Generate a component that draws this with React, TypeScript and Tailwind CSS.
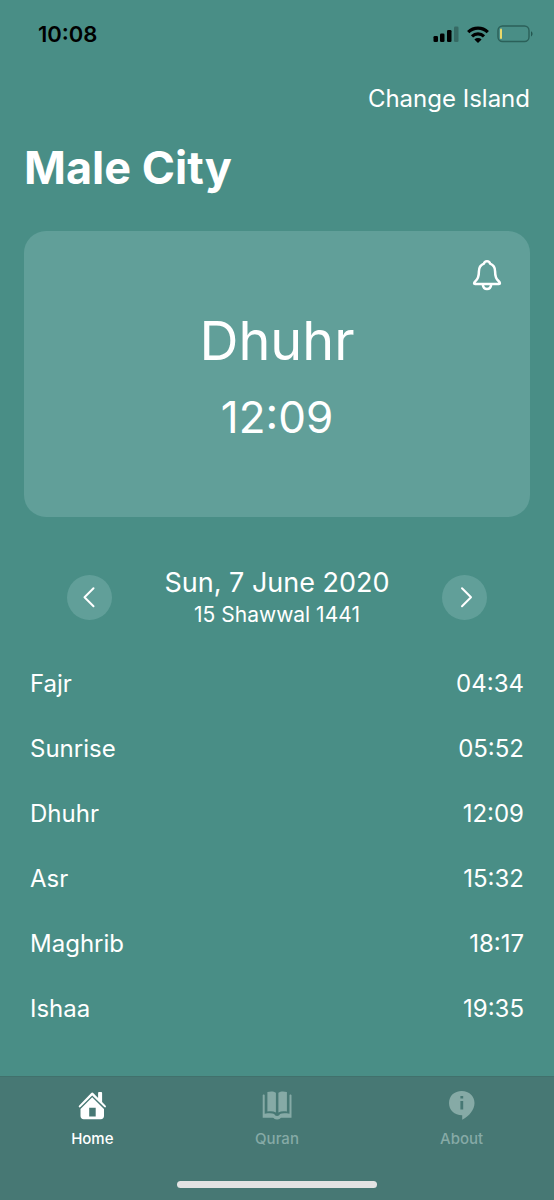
import React from "react";

const prayers = [
  { name: "Fajr", time: "04:34" },
  { name: "Sunrise", time: "05:52" },
  { name: "Dhuhr", time: "12:09" },
  { name: "Asr", time: "15:32" },
  { name: "Maghrib", time: "18:17" },
  { name: "Ishaa", time: "19:35" },
];

function StatusBar() {
  return (
    <header className="flex h-[68px] items-center justify-between pr-[21px] pl-[38px] text-black">
      <time className="text-[22px] leading-7 font-semibold">10:08</time>
      <div className="flex items-center gap-2">
        <svg width="26" height="16" viewBox="0 0 26 16" fill="currentColor" aria-hidden="true">
          <rect x="0.500" y="10" width="4.500" height="6" rx="1.3" />
          <rect x="7" y="7.500" width="4.500" height="8.500" rx="1.3" />
          <rect x="14" y="4" width="4.500" height="12" rx="1.3" />
          <rect x="21" y="0.500" width="4.500" height="15.500" rx="1.3" opacity="0.25" />
        </svg>
        <svg width="22" height="17" viewBox="0 0 22 17" fill="none" stroke="currentColor" strokeWidth="3.200" aria-hidden="true">
          <path d="M1.2 6.2a14 14 0 0 1 19.6 0" />
          <path d="M5 10.4a8.6 8.6 0 0 1 12 0" />
          <path d="M11 17 7.400 13.400a5.2 5.2 0 0 1 7.2 0Z" fill="currentColor" stroke="none" />
        </svg>
        <svg width="36" height="18" viewBox="0 0 36 18" fill="none" aria-hidden="true">
          <rect x="1" y="1" width="31" height="15.5" rx="4.5" stroke="#2b6059" strokeWidth="1.4" />
          <rect x="3" y="3.6" width="2" height="10.4" rx="1" fill="#e9d96a" />
          <path d="M34 6.2c2 1 2 4.200 0 5.200Z" fill="#245750" />
        </svg>
      </div>
    </header>
  );
}

function BellIcon() {
  return (
    <svg width="30" height="32" viewBox="0 0 30 32" fill="none" stroke="currentColor" strokeWidth="2.500" strokeLinejoin="round" strokeLinecap="round" aria-hidden="true">
      <path d="M15 2.200c-1.600 0-2.800 1-3.100 2.500C8.300 6.100 6.900 9 6.900 12.500c0 5-.9 7.200-3.200 9.300-1 .9-1.600 1.600-1.600 2.400 0 .6.4.9 1 .9h23.800c.6 0 1-.3 1-.9 0-.8-.6-1.500-1.600-2.400-2.300-2.100-3.200-4.300-3.200-9.300 0-3.500-1.400-6.400-5-7.800C17.800 3.200 16.600 2.200 15 2.200Z" />
      <path d="M10.900 26c.3 2.600 1.900 4 4.100 4s3.800-1.400 4.100-4" />
    </svg>
  );
}

function Chevron({ direction }: { direction: "left" | "right" }) {
  return (
    <svg width="24" height="24" viewBox="0 0 24 24" fill="none" stroke="currentColor" strokeWidth="2" strokeLinecap="round" strokeLinejoin="round" aria-hidden="true">
      <path d={direction === "left" ? "M15.500 3.300 6.500 12.300 15.500 21.300" : "M9 3.300 18 12.300 9 21.300"} />
    </svg>
  );
}

function HomeIcon() {
  return (
    <svg width="30" height="30" viewBox="0 0 30 30" fill="currentColor" aria-hidden="true">
      <path d="M2.200 15.500 14 3.300a1.700 1.700 0 0 1 2.500 0l4.600 4.700V3c0-.7.4-1.100 1.100-1.100h1.800c.7 0 1.100.4 1.100 1.100v8.900l3.400 3.600c1.200 1.300-.1 2.600-1.300 1.500L15.200 5.500 3.500 17c-1.200 1.100-2.500-.2-1.300-1.500Z" />
      <path fillRule="evenodd" d="M15.200 7.200 27 19v7.100c0 2-1.200 3.200-3.200 3.200H6.700c-2 0-3.200-1.200-3.200-3.200V19Zm-3 10.600v8.600h6.500v-8.600Z" />
    </svg>
  );
}

function BookIcon() {
  return (
    <svg width="30" height="30" viewBox="0 0 30 30" fill="currentColor" aria-hidden="true">
      <path d="M5.400 2.100c3.500-1.200 6.300-.8 8.500.6v19.700c-2.400-1.300-5.200-1.500-8.500-.9Z" />
      <path d="M24.900 2.100c-3.500-1.200-6.300-.8-8.500.6v19.700c2.400-1.300 5.200-1.500 8.500-.9Z" />
      <path d="M.7 5.200c0-1 2-1 2 0v18.500c4.200-.5 7.600-.6 9.500.3.500 1.300 1.500 1.900 2.900 1.900s2.400-.6 2.900-1.900c1.900-.9 5.300-.8 9.500-.3V5.200c0-1 2-1 2 0v22.500H19.300c-.9 0-1.600 1.900-4.200 1.900s-3.300-1.900-4.200-1.900H.7Z" />
    </svg>
  );
}

function InfoIcon() {
  return (
    <svg width="30" height="30" viewBox="0 0 30 30" fill="currentColor" aria-hidden="true">
      <path fillRule="evenodd" d="M14.700 1C22.200 1 27.500 6 27.500 13c0 6.700-5.300 13.200-12.300 16.800v-4.600C7.300 25.200 2 20.100 2 13S7.300 1 14.700 1Zm-1.300 5v2.600h2.800V6Zm0 5v8.600h2.800V11Z" />
    </svg>
  );
}

const tabs = [
  { label: "Home", Icon: HomeIcon, active: true },
  { label: "Quran", Icon: BookIcon, active: false },
  { label: "About", Icon: InfoIcon, active: false },
];

export default function App() {
  return (
    <div className="flex min-h-screen flex-col bg-[#498e86] font-['Inter',sans-serif] text-white">
      <StatusBar />
      <main className="flex grow flex-col px-6">
        <div className="flex justify-end pt-[13px]">
          <button type="button" className="text-[24px] leading-9 font-normal">Change Island</button>
        </div>
        <h1 className="pt-[23px] text-[45px] leading-[56px] font-bold">Male City</h1>

        <section className="relative mt-[35px] flex h-[286px] flex-col items-center justify-center gap-2 rounded-[22px] bg-[#619f99] pt-[6px]">
          <button type="button" aria-label="Toggle notification" className="absolute top-7 right-7">
            <BellIcon />
          </button>
          <h2 className="text-[54px] leading-[72px] font-normal">Dhuhr</h2>
          <time className="text-[44px] leading-[64px]">12:09</time>
        </section>

        <section className="mt-12 flex items-center justify-between px-[43px]">
          <button type="button" aria-label="Previous day" className="flex size-[45px] items-center justify-center rounded-full bg-[#619f99]">
            <Chevron direction="left" />
          </button>
          <div className="flex flex-col items-center">
            <span className="text-[27px] leading-9">Sun, 7 June 2020</span>
            <span className="text-[21px] leading-7">15 Shawwal 1441</span>
          </div>
          <button type="button" aria-label="Next day" className="flex size-[45px] items-center justify-center rounded-full bg-[#619f99]">
            <Chevron direction="right" />
          </button>
        </section>

        <ul className="mt-[22px] px-[6px] text-[24px] leading-8">
          {prayers.map((prayer) => (
            <li key={prayer.name} className="flex h-[65px] items-center justify-between">
              <span>{prayer.name}</span>
              <time>{prayer.time}</time>
            </li>
          ))}
        </ul>
      </main>

      <footer className="border-t border-[#41716c] bg-[#477874]">
        <nav className="grid grid-cols-3">
          {tabs.map(({ label, Icon, active }) => (
            <a
              key={label}
              href={"#" + label.toLowerCase()}
              aria-current={active ? "page" : undefined}
              className={active ? "flex flex-col items-center gap-[7px] pt-[13px] text-white" : "flex flex-col items-center gap-[7px] pt-[13px] text-[#86aaa6]"}
            >
              <Icon />
              <span className="text-[15px] leading-6 font-medium">{label}</span>
            </a>
          ))}
        </nav>
        <div className="flex justify-center pt-[30px] pb-3">
          <div className="h-[7px] w-[36%] rounded-full bg-[#e3e3e3]" />
        </div>
      </footer>
    </div>
  );
}
